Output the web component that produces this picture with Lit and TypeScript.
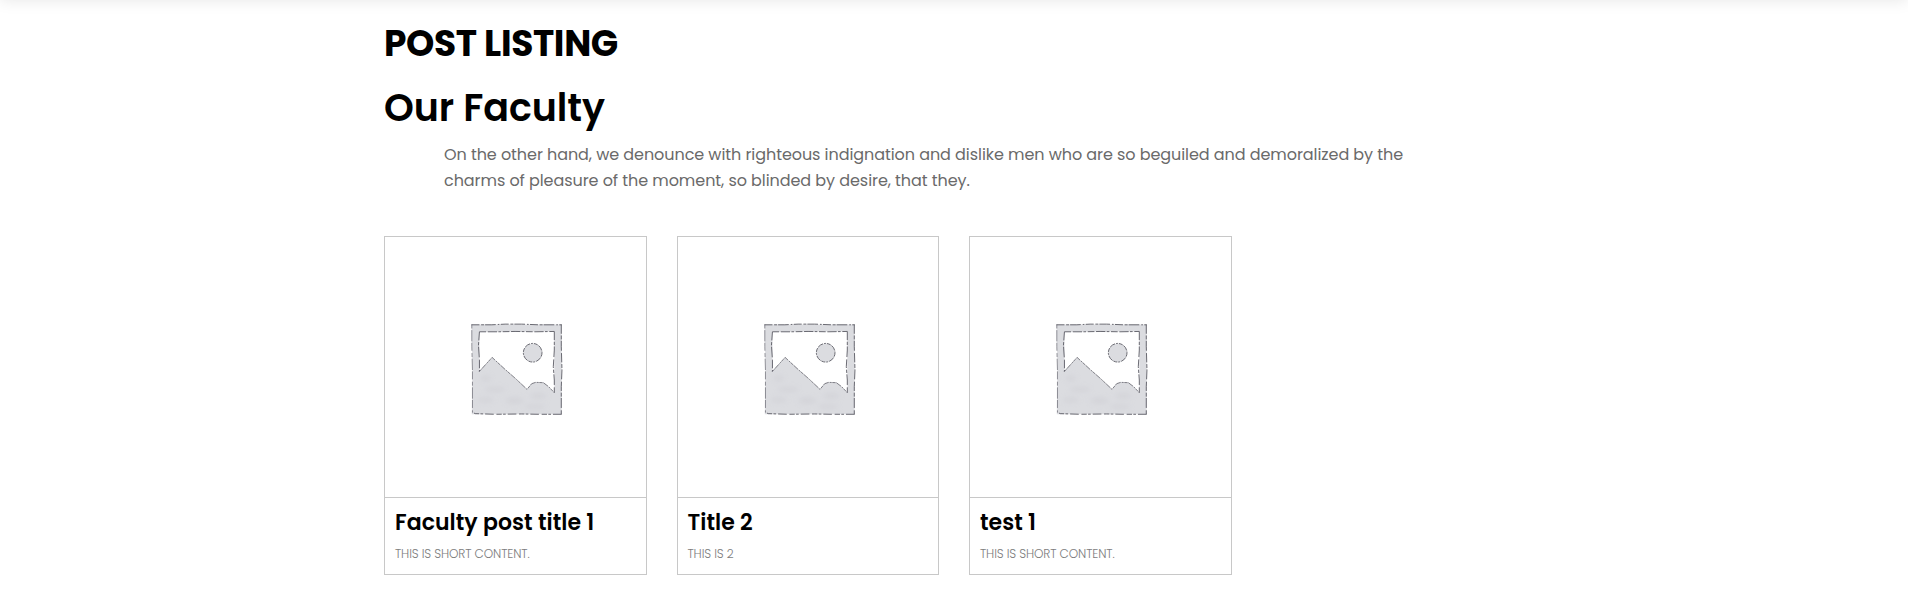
import { LitElement, html, css, svg } from "lit";
import { customElement, property } from "lit/decorators.js";

interface Post {
  title: string;
  text: string;
}

const POSTS: Post[] = [
  { title: "Faculty post title 1", text: "THIS IS SHORT CONTENT." },
  { title: "Title 2", text: "THIS IS 2" },
  { title: "test 1", text: "THIS IS SHORT CONTENT." },
];

const MOUNTAINS = "M72 185L111 142L150 178L183 207L216 238L230 221L242 217L265 218L281 230L298 248";

const placeholder = svg`
  <defs>
    <filter id="soft" x="-50%" y="-100%" width="200%" height="300%"><feGaussianBlur stdDeviation="8" /></filter>
  </defs>
  <g transform="translate(70.3 73.3) scale(0.33333)">
    <path fill="#dbdce0" fill-rule="evenodd" d="M49 43H320V313H50L52 180ZM73 65V184L111 142L216 238L230 221L242 217L265 218L281 230L298 248V64Z" />
    <g filter="url(#soft)" fill="#cdcdd3" opacity="0.5">
      <ellipse cx="120" cy="238" rx="32" ry="8" />
      <ellipse cx="92" cy="270" rx="24" ry="8" />
      <ellipse cx="178" cy="272" rx="28" ry="10" />
      <ellipse cx="250" cy="258" rx="26" ry="9" />
      <ellipse cx="92" cy="205" rx="16" ry="9" />
      <ellipse cx="240" cy="290" rx="32" ry="7" />
    </g>
    <circle cx="233" cy="128" r="28" fill="#dbdce0" />
    <g fill="none" stroke="#55555e" stroke-width="2.6">
      <path stroke-dasharray="24 5 9 3 32 6 5 4" d="M49 44H110L150 42H200L250 44H320" />
      <path stroke-dasharray="28 5 12 4 30 7" d="M319 43V110L321 180L319 230V313" />
      <path stroke-dasharray="26 6 8 4 16 8" d="M320 313H250L200 312L120 313L60 311L51 306" />
      <path stroke-dasharray="12 5 34 4 24 7" stroke-opacity="0.7" d="M50 43V110L52 180V308" />
      <path stroke-dasharray="20 5 28 4 8 5" d="M73 65H130L180 64L240 65L298 64" />
      <path stroke-dasharray="26 5 10 4 32 7" d="M73 65L70 105L73 150V184M298 64V120L295 170L298 210V248" />
      <path stroke-dasharray="10 2 18 3 6 2" stroke-opacity="0.85" d=${MOUNTAINS} />
      <circle cx="233" cy="128" r="28" stroke-dasharray="12 3 18 3 6 3" />
    </g>
  </g>`;

@customElement("post-card")
class PostCard extends LitElement {
  @property({ attribute: false }) post!: Post;

  static styles = css`
    :host { display: block; box-sizing: border-box; border: 1px solid #c8c8c8; height: 339px; }
    .picture { display: block; width: 100%; height: 260px; border-bottom: 1px solid #c8c8c8; }
    .body { padding: 10px; }
    .title { margin: 0; font-size: 22px; line-height: 30px; font-weight: 600; color: #000; white-space: nowrap; letter-spacing: 0.05px; }
    .text { margin: 6px 0 0; font-size: 12px; line-height: 20px; font-weight: 300; color: #7d7d7d; white-space: nowrap; letter-spacing: -0.12px; }
  `;

  render() {
    return html`
      <svg class="picture" viewBox="0 0 261 260" preserveAspectRatio="xMinYMin meet" role="img">${placeholder}</svg>
      <div class="body">
        <h3 class="title">${this.post.title}</h3>
        <p class="text">${this.post.text}</p>
      </div>`;
  }
}

@customElement("app-root")
class AppRoot extends LitElement {
  static styles = css`
    :host {
      display: block;
      height: 608px;
      overflow: hidden;
      background: #fff;
      font-family: Poppins, Inter, sans-serif;
      font-feature-settings: "cv11";
    }
    .header { height: 60px; margin-top: -60px; background: #fff; box-shadow: 0 0 15px rgba(0, 0, 0, 0.1); }
    .container { width: 1140px; margin: 0 auto; padding-top: 22px; }
    .page-title { margin: 0; font-size: 36px; line-height: 44px; font-weight: 700; letter-spacing: -0.35px; color: #000; }
    .section-title { margin: 15px 0 0; font-size: 38px; line-height: 54px; font-weight: 600; letter-spacing: -0.05px; color: #000; }
    .intro { margin: 7px 60px 42px; font-size: 16px; line-height: 26px; color: #6a6a6a; }
    .line { display: block; white-space: nowrap; letter-spacing: -0.062px; }
    .grid { display: grid; grid-template-columns: repeat(3, 262.5px); column-gap: 30px; }
  `;

  render() {
    return html`
      <div class="header"></div>
      <main class="container">
        <h1 class="page-title">POST LISTING</h1>
        <h2 class="section-title">Our Faculty</h2>
        <p class="intro">
          <span class="line">On the other hand, we denounce with righteous indignation and dislike men who are so beguiled and demoralized by the</span>
          <span class="line">charms of pleasure of the moment, so blinded by desire, that they.</span>
        </p>
        <section class="grid">
          ${POSTS.map((post) => html`<post-card .post=${post}></post-card>`)}
        </section>
      </main>`;
  }
}
